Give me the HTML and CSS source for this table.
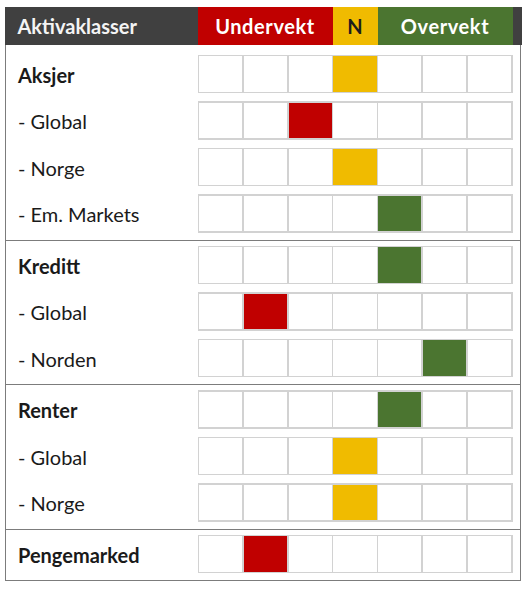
FILE: index.html
```html
<!DOCTYPE html>
<html lang="no">
<head>
<meta charset="utf-8">
<title>Aktivaklasser</title>
<link rel="stylesheet" href="styles.css">
</head>
<body>
<div class="table">
  <div class="head">
    <div class="h-label">Aktivaklasser</div>
    <div class="h-under">Undervekt</div>
    <div class="h-n">N</div>
    <div class="h-over">Overvekt</div>
    <div class="h-end"></div>
  </div>

  <div class="group first">
    <div class="row"><div class="label bold">Aksjer</div><div class="cells"><i></i><i></i><i></i><i class="y"></i><i></i><i></i><i></i></div></div>
    <div class="row"><div class="label">- Global</div><div class="cells"><i></i><i></i><i class="r"></i><i></i><i></i><i></i><i></i></div></div>
    <div class="row"><div class="label">- Norge</div><div class="cells"><i></i><i></i><i></i><i class="y"></i><i></i><i></i><i></i></div></div>
    <div class="row"><div class="label">- Em. Markets</div><div class="cells"><i></i><i></i><i></i><i></i><i class="g"></i><i></i><i></i></div></div>
  </div>

  <div class="group">
    <div class="row"><div class="label bold">Kreditt</div><div class="cells"><i></i><i></i><i></i><i></i><i class="g"></i><i></i><i></i></div></div>
    <div class="row"><div class="label">- Global</div><div class="cells"><i></i><i class="r"></i><i></i><i></i><i></i><i></i><i></i></div></div>
    <div class="row"><div class="label">- Norden</div><div class="cells"><i></i><i></i><i></i><i></i><i></i><i class="g"></i><i></i></div></div>
  </div>

  <div class="group">
    <div class="row"><div class="label bold">Renter</div><div class="cells"><i></i><i></i><i></i><i></i><i class="g"></i><i></i><i></i></div></div>
    <div class="row"><div class="label">- Global</div><div class="cells"><i></i><i></i><i></i><i class="y"></i><i></i><i></i><i></i></div></div>
    <div class="row"><div class="label">- Norge</div><div class="cells"><i></i><i></i><i></i><i class="y"></i><i></i><i></i><i></i></div></div>
  </div>

  <div class="group">
    <div class="row"><div class="label bold">Pengemarked</div><div class="cells"><i></i><i class="r"></i><i></i><i></i><i></i><i></i><i></i></div></div>
  </div>
</div>
</body>
</html>
```

FILE: styles.css
```css
html, body {
  margin: 0;
  padding: 0;
  background: #ffffff;
}

body {
  font-family: Lato, "Liberation Sans", sans-serif;
  color: #1a1a1a;
}

.table {
  box-sizing: border-box;
  width: 516px;
  margin: 7px 0 0 5px;
  border-left: 1.5px solid #7c7c7c;
  border-right: 1.5px solid #7c7c7c;
  border-bottom: 1.5px solid #7c7c7c;
}

.head {
  display: flex;
  height: 37.5px;
  margin: 0 -1.5px;
  background: #404040;
  font-weight: 700;
  font-size: 20px;
  color: #ffffff;
}

.head > div {
  display: flex;
  align-items: center;
  padding-top: 1px;
  box-sizing: border-box;
}

.h-label {
  width: 193px;
  padding-left: 13px;
  color: #f4f4f4;
}

.h-under,
.h-over {
  letter-spacing: 0.6px;
}

.h-under {
  width: 135px;
  justify-content: center;
  background: #c00000;
}

.h-n {
  width: 45px;
  justify-content: center;
  background: #f0bb00;
  color: #1c1c1c;
}

.h-over {
  width: 135px;
  justify-content: center;
  background: #4b7530;
}

.h-end {
  flex: 1;
}

.group {
  display: flex;
  flex-direction: column;
  gap: 8px;
  padding: 5px 0 7px;
  border-top: 1.5px solid #7c7c7c;
}

.group.first {
  padding-top: 10px;
  border-top: none;
}

.row {
  display: flex;
  align-items: center;
  height: 38.5px;
}

.label {
  width: 191.5px;
  padding-left: 12px;
  padding-top: 2px;
  box-sizing: border-box;
  font-size: 20px;
}

.label.bold {
  font-weight: 700;
}

.cells {
  display: grid;
  grid-template-columns: repeat(7, 1fr);
  gap: 1.5px;
  padding: 1.5px;
  box-sizing: border-box;
  width: 315px;
  height: 38.5px;
  background: #d2d2d2;
}

.cells i {
  display: block;
  background: #ffffff;
}

.cells i.y {
  background: #f0bb00;
}

.cells i.r {
  background: #c00000;
}

.cells i.g {
  background: #4b7530;
}
```
